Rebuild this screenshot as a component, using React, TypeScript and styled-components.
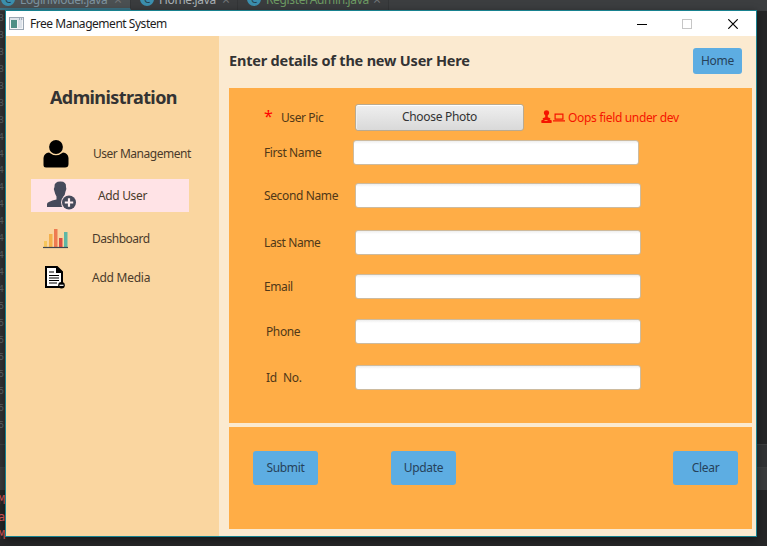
import React from "react";
import styled, { createGlobalStyle } from "styled-components";

const Global = createGlobalStyle`
  * { box-sizing: border-box; }
  html, body { margin: 0; padding: 0; overflow: hidden; background: #2b2b2b; }
  body { font-family: "Noto Sans", "Open Sans", sans-serif; font-size: 12px; color: #333; }
`;

/* ---------- code editor behind the window ---------- */
const Editor = styled.div`
  position: relative;
  width: 767px;
  height: 546px;
  overflow: hidden;
  background: #252627;
`;
const Tabs = styled.div`
  display: flex;
  height: 11px;
  background: #3c3e40;
  overflow: hidden;
`;
const Tab = styled.div<{ $w: number; $pad: number; $color: string; $active?: boolean }>`
  display: flex;
  gap: 5px;
  width: ${(p) => p.$w}px;
  height: 10px;
  padding-left: ${(p) => p.$pad}px;
  color: ${(p) => p.$color};
  background: ${(p) => (p.$active ? "#4b5052" : "#3a3c3e")};
  border-right: 1px solid #333537;
  border-bottom: ${(p) => (p.$active ? "2px solid #3b7386" : "0")};
  font-size: 12px;
  line-height: 16px;
  letter-spacing: -0.35px;
  white-space: nowrap;
`;
const TabDot = styled.span`
  flex: none;
  width: 14px;
  height: 14px;
  margin-top: -8px;
  border-radius: 50%;
  background: #3b8fae;
  color: #23404c;
  font-size: 10px;
  line-height: 14px;
  text-align: center;
`;
const TabName = styled.span<{ $w: number }>`
  flex: none;
  width: ${(p) => p.$w}px;
  margin-top: -8px;
`;
const TabClose = styled.span`
  margin-top: -8px;
  color: #707476;
  font-size: 14px;
`;
const Gutter = styled.div`
  width: 5px;
  height: 433px;
  overflow: hidden;
  background: #303234;
  color: #5d6163;
  font: 10px/16.95px "Liberation Mono", monospace;
`;
const GutterLine = styled.div`
  height: 16.95px;
  margin-left: -2px;
`;
const Bar = styled.div<{ $bg: string }>`
  height: 23px;
  background: ${(p) => p.$bg};
  border-top: 1px solid #3d3f40;
`;
const Console = styled.div`
  padding-top: 2px;
  color: #e05a5a;
  font: 12px/17.3px "DejaVu Sans Mono", monospace;
`;
const ConsoleLine = styled.div`
  height: 17.3px;
  margin-left: -2px;
  white-space: pre;
`;

/* ---------- application window ---------- */
const Window = styled.div`
  position: absolute;
  left: 5px;
  top: 10px;
  width: 752px;
  height: 527px;
  display: flex;
  flex-direction: column;
  border: 1px solid #17818f;
  background: #fbead0;
  box-shadow: 0 2px 8px rgba(0, 0, 0, 0.45);
`;
const TitleBar = styled.header`
  display: flex;
  align-items: center;
  height: 25px;
  padding-left: 3px;
  background: #fff;
`;
const Title = styled.span`
  flex: 1;
  margin-left: 6px;
  color: #1c1c1c;
  letter-spacing: -0.47px;
`;
const Controls = styled.div`
  display: flex;
  gap: 35px;
  padding-right: 18px;
  svg:last-child { margin-left: 1px; }
`;
const Body = styled.div`
  display: flex;
  flex: 1;
`;
const Sidebar = styled.nav`
  width: 213px;
  background: #fad6a0;
`;
const SidebarHeading = styled.h1`
  margin: 48px 0 0 44px;
  height: 26px;
  font-size: 18px;
  line-height: 27px;
  letter-spacing: -0.6px;
  white-space: nowrap;
`;
const NavItem = styled.a<{ $top: number; $icon: number; $text: number; $ls: number; $active?: boolean }>`
  display: flex;
  align-items: center;
  height: 33px;
  width: 158px;
  margin: ${(p) => p.$top}px 0 0 25px;
  background: ${(p) => (p.$active ? "#ffe3e6" : "transparent")};
  white-space: nowrap;
  color: #4a3b2b;
  letter-spacing: ${(p) => p.$ls}px;
  svg { flex: none; margin-left: ${(p) => p.$icon}px; margin-right: ${(p) => p.$text}px; }
`;
const Main = styled.main`
  flex: 1;
  padding: 0 4px 0 10px;
`;
const Heading = styled.div`
  display: flex;
  align-items: center;
  justify-content: space-between;
  height: 52px;
  padding: 0 10px 2px 0;
`;
const HeadingText = styled.h2`
  margin: 0 0 2px;
  font-size: 14.5px;
  letter-spacing: -0.2px;
  white-space: nowrap;
`;
const BlueButton = styled.button<{ $w: number; $h: number }>`
  width: ${(p) => p.$w}px;
  height: ${(p) => p.$h}px;
  padding: 0 0 1px;
  border: 0;
  border-radius: 3px;
  background: #5dade2;
  color: #26425a;
  font: inherit;
  letter-spacing: -0.3px;
`;
const Panel = styled.section<{ $h: number }>`
  height: ${(p) => p.$h}px;
  margin-bottom: 4px;
  background: #ffad46;
  overflow: hidden;
`;
const Row = styled.div<{ $top: number; $h: number }>`
  display: flex;
  align-items: center;
  height: ${(p) => p.$h}px;
  margin-top: ${(p) => p.$top}px;
`;
const Label = styled.label<{ $left: number; $end: number; $ls: number }>`
  flex: none;
  width: ${(p) => p.$end}px;
  padding-left: ${(p) => p.$left}px;
  line-height: 17px;
  letter-spacing: ${(p) => p.$ls}px;
  color: #503818;
  white-space: pre;
`;
const Required = styled.span`
  display: inline-block;
  width: 17px;
  color: #f00;
  font-size: 16px;
  line-height: 16px;
`;
const Input = styled.input`
  width: 286px;
  height: 25px;
  padding: 0 6px;
  border: 1px solid #cdbb9f;
  border-radius: 3px;
  background: linear-gradient(#eee, #fff 3px);
  outline: none;
`;
const PhotoButton = styled.button`
  width: 169px;
  height: 27px;
  border: 1px solid #b9aa91;
  border-radius: 3px;
  background: linear-gradient(#efefef, #d9d9d9);
  box-shadow: inset 0 1px 0 #fff, inset 1px 0 0 #eee;
  padding: 0 0 1px;
  color: #333;
  font: inherit;
  letter-spacing: -0.3px;
`;
const Warning = styled.span`
  display: flex;
  align-items: center;
  gap: 3px;
  margin-left: 17px;
  color: #f51400;
  letter-spacing: -0.34px;
  white-space: nowrap;
`;
const Actions = styled.div`
  display: flex;
  margin: 24px 14px 0 24px;
`;
const Push = styled.div<{ $w?: number }>`
  ${(p) => (p.$w ? `width: ${p.$w}px;` : "flex: 1;")}
`;

const AppIcon = () => (
  <svg width="15" height="13" viewBox="0 0 15 13">
    <rect x=".5" y=".5" width="14" height="12" fill="#f3f5f7" stroke="#9aa6b2" />
    <rect x="2" y="3" width="6" height="8" fill="#4d8f86" />
    <rect x="9" y="3" width="4" height="8" fill="#dbe1e8" />
    <path d="M1 2h13" stroke="#c7d0da" />
    <path d="M10 2h1M12 2h1" stroke="#687a90" />
  </svg>
);
const MinIcon = () => (
  <svg width="10" height="10"><path d="M0 5.5h10" stroke="#000" /></svg>
);
const MaxIcon = () => (
  <svg width="10" height="10"><rect x=".5" y=".5" width="9" height="9" fill="none" stroke="#c6c6c6" /></svg>
);
const CloseIcon = () => (
  <svg width="10" height="10"><path d="M.3.3l9.4 9.4M9.7.3L.3 9.7" stroke="#000" strokeWidth="1.2" /></svg>
);
const UserIcon = () => (
  <svg width="26" height="28" viewBox="0 0 26 28">
    <path d="M0.500 25V18Q1 13 6 12.500Q13 18 20 12.500Q25 13 25.500 18V24Q25.500 27.500 22 27.500H3Q.5 27.500.5 25Z" />
    <ellipse cx="13" cy="7" rx="6.900" ry="7" />
  </svg>
);
const AddUserIcon = () => (
  <svg width="30" height="29" viewBox="0 0 30 29">
    <path d="M7.500 6Q7 .5 13.500.5Q19.500.5 19 6Q20 8 18.500 10.500Q18 14 16.500 15.500V18L22 20V26H0V23Q0 20.500 9.500 18.500V15.500Q8 13 7.500 10.500Q6 8 7.500 6Z" fill="#464a5a" />
    <circle cx="22" cy="21.500" r="8" fill="#ffe3e6" />
    <circle cx="22" cy="21.500" r="7" fill="#464a5a" />
    <path d="M17.800 21.500h8.400M22 17.300v8.400" stroke="#ffeef0" strokeWidth="2.200" />
  </svg>
);
const ChartIcon = () => (
  <svg width="25" height="20" viewBox="0 0 25 20">
    <rect x="1" y="12" width="3" height="6" fill="#f6c65b" />
    <rect x="6" y="5" width="3.500" height="13" fill="#f4b04a" />
    <rect x="11" y="0" width="3.500" height="18" fill="#ee7b51" />
    <rect x="16" y="9" width="3.500" height="9" fill="#dd4e43" />
    <rect x="21" y="3" width="3.500" height="15" fill="#5fb7a5" />
    <path d="M0 18.500h25" stroke="#3f4650" strokeWidth="1.200" />
  </svg>
);
const MediaIcon = () => (
  <svg width="20" height="23" viewBox="0 0 20 23">
    <path d="M1 1H12L17 6V21H1Z" fill="#fff" stroke="#000" strokeWidth="2" />
    <path d="M11 0L18 7H11Z" />
    <path d="M4 6h5M4 9.500h10M4 12h10M4 14.500h10M4 17h8" stroke="#000" strokeWidth="1.200" />
    <circle cx="16.500" cy="19.300" r="3.300" />
    <path d="M14.500 19.300h4" stroke="#fff" strokeWidth="1.200" />
  </svg>
);
const WorkerIcon = () => (
  <svg width="24" height="14" viewBox="0 0 24 14" fill="#f51400">
    <path d="M2.800 2.500Q3 .3 5.500 .3Q8 .3 8.200 2.500Q8.200 4.500 6.800 5.300V7.300L9.300 8.300Q9.600 9 8.500 9.500L10.500 10.200Q11 11 10.500 13H.5Q0 11 .5 10.200L2.500 9.500Q1.400 9 1.700 8.300L4.200 7.300V5.300Q2.800 4.500 2.800 2.500Z" />
    <path d="M3.500 10.500h3" stroke="#ffad46" strokeWidth=".8" />
    <path d="M14.100 4.100h7.800v5h-7.800zM12 10.900h12" fill="none" stroke="#f51400" strokeWidth="1.200" />
  </svg>
);

const gutter = "3333333444444444455555555".split("");
const fields = [
  { text: "First Name", top: 10, left: 35, end: 124, ls: -0.4 },
  { text: "Second Name", top: 18, left: 35, end: 126, ls: -0.37 },
  { text: "Last Name", top: 22, left: 35, end: 126, ls: -0.4 },
  { text: "Email", top: 19, left: 35, end: 126, ls: -0.4 },
  { text: "Phone", top: 20, left: 37, end: 126, ls: -0.4 },
  { text: "Id  No.", top: 21, left: 37, end: 126, ls: -0.2 },
];

export default function App() {
  return (
    <Editor>
      <Global />
      <Tabs>
        <Tab $w={131} $pad={1} $color="#7d93a0" $active>
          <TabDot>C</TabDot><TabName $w={89}>LoginModel.java</TabName><TabClose>×</TabClose>
        </Tab>
        <Tab $w={107} $pad={9} $color="#a9b0b4">
          <TabDot>C</TabDot><TabName $w={58}>Home.java</TabName><TabClose>×</TabClose>
        </Tab>
        <Tab $w={151} $pad={9} $color="#6d9a62">
          <TabDot>C</TabDot><TabName $w={102}>RegisterAdmin.java</TabName><TabClose>×</TabClose>
        </Tab>
      </Tabs>
      <Gutter>{gutter.map((d, i) => <GutterLine key={i}>{d}</GutterLine>)}</Gutter>
      <Bar $bg="#313335" />
      <Bar $bg="#3a3c3d" />
      <Console>
        <ConsoleLine>M</ConsoleLine>
        <ConsoleLine>a</ConsoleLine>
        <ConsoleLine>M</ConsoleLine>
      </Console>
      <Window>
        <TitleBar>
          <AppIcon />
          <Title>Free Management System</Title>
          <Controls><MinIcon /><MaxIcon /><CloseIcon /></Controls>
        </TitleBar>
        <Body>
          <Sidebar>
            <SidebarHeading>Administration</SidebarHeading>
            <NavItem $top={27} $icon={12} $text={24} $ls={-0.48}><UserIcon />User Management</NavItem>
            <NavItem $top={9} $icon={16} $text={21} $ls={-0.35} $active><AddUserIcon />Add User</NavItem>
            <NavItem $top={10} $icon={12} $text={24} $ls={-0.5}><ChartIcon />Dashboard</NavItem>
            <NavItem $top={6} $icon={14} $text={27} $ls={-0.25}><MediaIcon />Add Media</NavItem>
          </Sidebar>
          <Main>
            <Heading>
              <HeadingText>Enter details of the new User Here</HeadingText>
              <BlueButton $w={49} $h={26}>Home</BlueButton>
            </Heading>
            <Panel $h={335}>
              <Row $top={16} $h={26}>
                <Label $left={35} $end={126} $ls={-0.4}><Required>*</Required>User Pic</Label>
                <PhotoButton>Choose Photo</PhotoButton>
                <Warning><WorkerIcon />Oops field under dev</Warning>
              </Row>
              {fields.map((f) => (
                <Row key={f.text} $top={f.top} $h={25}>
                  <Label $left={f.left} $end={f.end} $ls={f.ls}>{f.text}</Label>
                  <Input />
                </Row>
              ))}
            </Panel>
            <Panel $h={102}>
              <Actions>
                <BlueButton $w={65} $h={34}>Submit</BlueButton>
                <Push $w={73} />
                <BlueButton $w={65} $h={34}>Update</BlueButton>
                <Push />
                <BlueButton $w={65} $h={34}>Clear</BlueButton>
              </Actions>
            </Panel>
          </Main>
        </Body>
      </Window>
    </Editor>
  );
}
